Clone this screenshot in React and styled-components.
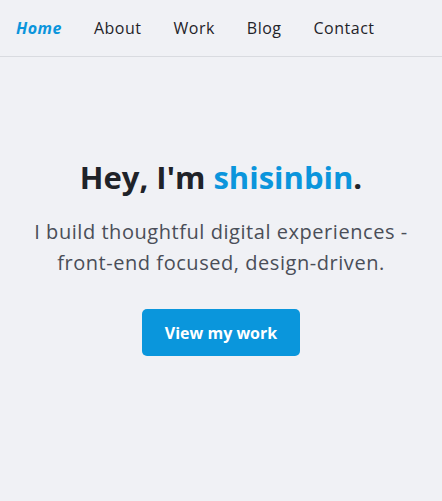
import React from "react";
import styled, { createGlobalStyle } from "styled-components";

const GlobalStyle = createGlobalStyle`
    body {
        margin: 0;
        background: #f0f1f5;
        font-family: "Open Sans", "Noto Sans", sans-serif;
        color: #1f2329;
    }
`

const Page = styled.div`
    min-height: 501px;
    background: #f0f1f5;
`

const Nav = styled.nav`
    display: flex;
    align-items: center;
    gap: 32px;
    height: 56px;
    padding: 0 16px;
    border-bottom: 1px solid #d9dbe0;
`

const NavLink = styled.a`
    font-size: 16px;
    letter-spacing: 0.5px;
    text-decoration: none;
    color: ${(p) => (p.$active ? "#0b95dc" : "#1f2329")};
    font-weight: ${(p) => (p.$active ? 700 : 500)};
    font-style: ${(p) => (p.$active ? "italic" : "normal")};
`

const Hero = styled.main`
    display: flex;
    flex-direction: column;
    align-items: center;
    text-align: center;
    padding: 101px 16px 0;
`

const Title = styled.h1`
    margin: 0;
    font-size: 31px;
    line-height: 38px;
    font-weight: 700;
    color: #1f2329;
`

const Accent = styled.span`
    color: #0b95dc;
`

const Subtitle = styled.p`
    margin: 20px 0 0;
    font-size: 20px;
    letter-spacing: 0.55px;
    line-height: 31px;
    color: #4a4e58;
`

const Button = styled.button`
    margin-top: 31px;
    width: 158px;
    height: 47px;
    border: none;
    border-radius: 5px;
    background: #0a96dc;
    color: #ffffff;
    font-family: inherit;
    font-size: 16px;
    font-weight: 700;
    cursor: pointer;
`

const links = ["About", "Work", "Blog", "Contact"];

function App() {
    return (
        <Page>
            <GlobalStyle />
            <Nav>
                <NavLink href="#" $active>Home</NavLink>
                {links.map((l) => (
                    <NavLink key={l} href="#">{l}</NavLink>
                ))}
            </Nav>
            <Hero>
                <Title>Hey, I'm <Accent>shisinbin</Accent>.</Title>
                <Subtitle>
                    I build thoughtful digital experiences -<br />
                    front-end focused, design-driven.
                </Subtitle>
                <Button>View my work</Button>
            </Hero>
        </Page>
    );
}

export default App;
